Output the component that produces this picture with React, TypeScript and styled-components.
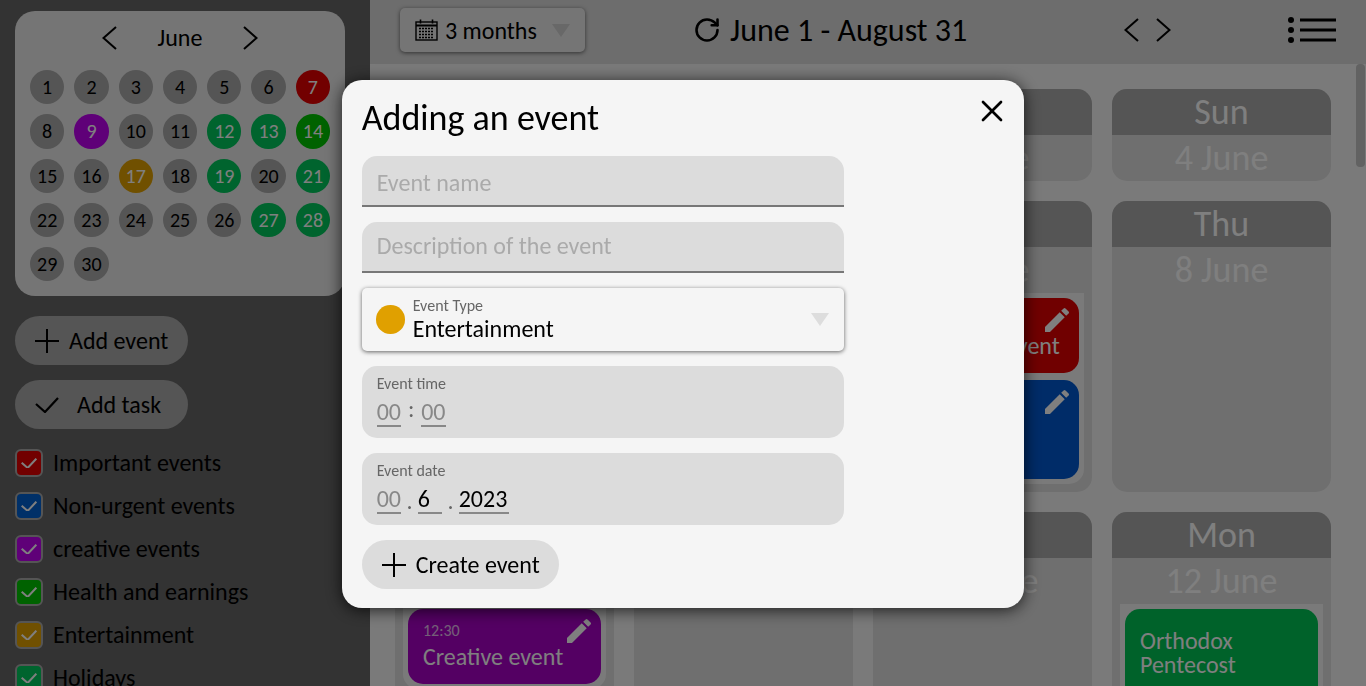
import styled, { createGlobalStyle } from "styled-components";
import { RotateCw, X } from "lucide-react";
import { MdEdit } from "react-icons/md";

const GlobalStyle = createGlobalStyle`
  html, body {
    margin: 0;
    height: 100%;
    overflow: hidden;
  }
  body {
    font-family: Carlito, Calibri, Lato, sans-serif;
    color: #000;
  }
  * {
    box-sizing: border-box;
  }
`;

const Page = styled.div`
  display: flex;
  height: 100vh;
  overflow: hidden;
`;

const Sidebar = styled.aside`
  width: 370px;
  flex: none;
  height: 100%;
  overflow: hidden;
  padding: 11px 15px 0;
  background: #666;
`;

const MiniCalendar = styled.section`
  width: 330px;
  height: 285px;
  padding: 0 15px;
  border-radius: 20px;
  background: #eaeaea;
`;

const MonthBar = styled.div`
  display: flex;
  align-items: center;
  justify-content: center;
  gap: 33px;
  height: 59px;
  padding-bottom: 6px;
  font-size: 24px;
`;

const MonthName = styled.span`
  width: 60px;
  text-align: center;
`;

const DaysGrid = styled.div`
  display: grid;
  grid-template-columns: repeat(7, 1fr);
  gap: 10px;
`;

const DayDot = styled.div<{ $color?: string }>`
  display: flex;
  align-items: center;
  justify-content: center;
  aspect-ratio: 1;
  border-radius: 50%;
  font-size: 20px;
  background: ${(p) => p.$color || "#aaa"};
  color: ${(p) => (p.$color ? "#fff" : "#000")};
`;

const PillButton = styled.div<{ $tone: string; $width: number; $gap: number }>`
  display: flex;
  align-items: center;
  gap: ${(p) => p.$gap}px;
  width: ${(p) => p.$width}px;
  height: 49px;
  padding-left: 20px;
  border-radius: 25px;
  background: ${(p) => p.$tone};
  font-size: 24px;
`;

const SideButtons = styled.div`
  display: flex;
  flex-direction: column;
  gap: 15px;
  margin-top: 20px;
`;

const Filters = styled.ul`
  display: flex;
  flex-direction: column;
  gap: 15px;
  margin: 20px 0 0;
  padding: 0;
  list-style: none;
`;

const FilterRow = styled.li`
  display: flex;
  align-items: center;
  gap: 10px;
  height: 28px;
  font-size: 24px;
`;

const FilterBox = styled.span<{ $color: string }>`
  display: flex;
  align-items: center;
  justify-content: center;
  width: 28px;
  height: 28px;
  border: 2px solid #aaa;
  border-radius: 6px;
  background: ${(p) => p.$color};
`;

const FilterLabel = styled.span`
  padding-bottom: 2px;
`;

const Main = styled.main`
  flex: 1;
  min-width: 0;
  display: flex;
  flex-direction: column;
  height: 100%;
`;

const TopBar = styled.header`
  flex: none;
  display: flex;
  align-items: center;
  height: 64px;
  padding: 0 0 4px 30px;
  background: #dadada;
`;

const RangeSelect = styled.div`
  display: flex;
  align-items: center;
  width: 185px;
  height: 44px;
  padding-left: 15px;
  border-radius: 5px;
  background: #eaeaea;
  box-shadow: 0 1px 4px rgba(0, 0, 0, 0.55);
  font-size: 24px;
`;

const RangeLabel = styled.span`
  margin-left: 7px;
`;

const Caret = styled.span<{ $color: string; $gap: number }>`
  width: 0;
  height: 0;
  margin-left: ${(p) => p.$gap}px;
  border-left: 9px solid transparent;
  border-right: 9px solid transparent;
  border-top: 13px solid ${(p) => p.$color};
`;

const RangeTitle = styled.div`
  display: flex;
  align-items: center;
  gap: 9px;
  width: 277px;
  margin-left: 108px;
  font-size: 32px;
  white-space: nowrap;

  svg {
    flex: none;
  }
`;

const Pager = styled.div`
  display: flex;
  gap: 17px;
  margin-left: 154px;
`;

const ListButton = styled.div`
  margin-left: 117px;
  line-height: 0;
`;

const Content = styled.div`
  flex: 1;
  min-height: 0;
  display: flex;
  background: #f5f5f5;
`;

const Board = styled.div`
  flex: 1;
  min-width: 0;
  height: 100%;
  overflow: hidden;
  display: grid;
  grid-template-columns: repeat(4, 219px);
  grid-auto-rows: min-content;
  column-gap: 20px;
  row-gap: 20px;
  align-content: start;
  padding: 25px 0 0 25px;
`;

const ScrollTrack = styled.div`
  flex: none;
  width: 10px;
`;

const ScrollThumb = styled.div`
  width: 9px;
  height: 103px;
  border-radius: 4px;
  background: #c4c4c4;
`;

const DayCard = styled.article<{ $tall?: boolean }>`
  display: flex;
  flex-direction: column;
  min-height: ${(p) => (p.$tall ? 291 : 92)}px;
  border-radius: 15px;
  overflow: hidden;
  background: #dedede;
`;

const DayName = styled.div`
  height: 46px;
  line-height: 46px;
  text-align: center;
  font-size: 36px;
  color: #fff;
  background: #aaa;
`;

const DayDate = styled.div`
  height: 46px;
  line-height: 46px;
  text-align: center;
  font-size: 36px;
  color: #fff;
`;

const EventList = styled.div`
  display: flex;
  flex-direction: column;
  gap: 7px;
  margin: 0 8px 8px;
  padding: 5px;
  border-radius: 0 0 15px 15px;
  background: #f5f5f5;
`;

const EventChip = styled.div<{ $color: string; $height: number; $timed: boolean }>`
  position: relative;
  height: ${(p) => p.$height}px;
  padding: ${(p) => (p.$timed ? 14 : 20)}px 15px 0;
  border-radius: 15px;
  background: ${(p) => p.$color};
  color: #fff;
  font-size: 24px;
  line-height: 24px;
`;

const EventTime = styled.div`
  font-size: 16px;
  line-height: 16px;
  margin-bottom: 6px;
  opacity: 0.75;
`;

const EditIcon = styled(MdEdit)`
  position: absolute;
  top: 6px;
  right: 6px;
  color: #fff;
`;

const Overlay = styled.div`
  position: fixed;
  inset: 0;
  display: flex;
  align-items: center;
  justify-content: center;
  background: rgba(0, 0, 0, 0.5);
`;

const Modal = styled.section`
  position: relative;
  display: flex;
  flex-direction: column;
  width: 682.67px;
  height: 528px;
  margin-top: 2px;
  padding: 20px 20px 0;
  border-radius: 20px;
  background: #f5f5f5;
  box-shadow: 0 2px 16px rgba(0, 0, 0, 0.75);
`;

const ModalTitle = styled.h2`
  margin: 0;
  height: 56px;
  font-size: 36px;
  font-weight: 400;
  line-height: 36px;
`;

const CloseButton = styled.div`
  position: absolute;
  top: 13px;
  right: 14px;
  line-height: 0;
`;

const Form = styled.div`
  display: flex;
  flex-direction: column;
  width: 482.3px;
`;

const TextField = styled.div<{ $top: number }>`
  height: 51px;
  margin-bottom: 15px;
  padding: ${(p) => p.$top}px 15px 0;
  border-radius: 15px 15px 0 0;
  border-bottom: 2px solid #777;
  background: #dcdcdc;
  color: #aaa;
  font-size: 24px;
  line-height: 30px;
`;

const TypeSelect = styled.div`
  display: flex;
  align-items: center;
  height: 63px;
  margin-bottom: 15px;
  padding: 0 15px 0 14.5px;
  border-radius: 5px;
  background: #f5f5f5;
  box-shadow: 0 1px 4px rgba(0, 0, 0, 0.6);
`;

const TypeDot = styled.span`
  width: 28.5px;
  height: 28.5px;
  border-radius: 50%;
  background: #e0a000;
`;

const TypeText = styled.div`
  flex: 1;
  margin-left: 8px;
`;

const SmallLabel = styled.div`
  font-size: 16px;
  line-height: 18px;
  color: #666;
`;

const TypeValue = styled.div`
  font-size: 24px;
  line-height: 28px;
`;

const StampField = styled.div`
  height: 71.5px;
  margin-bottom: 15.5px;
  padding: 9px 15px 0;
  border-radius: 15px;
  background: #dcdcdc;
`;

const StampRow = styled.div`
  display: flex;
  align-items: flex-end;
  margin-top: 5px;
`;

const StampPart = styled.span<{ $width: number; $filled?: boolean }>`
  width: ${(p) => p.$width}px;
  height: 29px;
  border-bottom: 2px solid #888;
  font-size: 24px;
  line-height: 28px;
  color: ${(p) => (p.$filled ? "#000" : "#888")};
`;

const StampSep = styled.span<{ $colon?: boolean }>`
  width: ${(p) => (p.$colon ? 20 : 16.5)}px;
  height: 29px;
  text-align: center;
  font-size: 24px;
  line-height: ${(p) => (p.$colon ? 22 : 32)}px;
  color: #666;
`;

const Chevron = ({ dir }: { dir: "left" | "right" }) => (
  <svg width="15" height="24" viewBox="0 0 15 24" fill="none" stroke="#000" strokeWidth="2">
    <path d={dir === "left" ? "M14 1 L1.5 12 L14 23" : "M1 1 L13.5 12 L1 23"} />
  </svg>
);

const PlusGlyph = () => (
  <svg width="24" height="24" viewBox="0 0 24 24" fill="none" stroke="#000" strokeWidth="2">
    <path d="M0 12H24M12 0V24" />
  </svg>
);

const CheckGlyph = ({ color = "#000", width = 24, weight = 2.2 }: { color?: string; width?: number; weight?: number }) => (
  <svg width={width} height={(width * 16) / 24} viewBox="0 0 24 16" fill="none" stroke={color} strokeWidth={weight}>
    <path d="M1 7 L10 15 L23 1" />
  </svg>
);

const CalendarGlyph = () => (
  <svg width="23" height="22" viewBox="0 0 23 22" fill="none" stroke="#000">
    <rect x="1" y="3" width="21" height="18" strokeWidth="1.4" />
    <path d="M1 6.5H22" strokeWidth="2" />
    <path d="M5.5 0.5V4.5M17.5 0.5V4.5" strokeWidth="1.6" />
    <path d="M4 9.5H19M4 12.5H19M4 15.5H19M4 18.5H19" strokeWidth="1.6" strokeDasharray="2 1" />
  </svg>
);

const ListGlyph = () => (
  <svg width="48" height="26" viewBox="0 0 48 26" fill="#000">
    <circle cx="3" cy="3" r="3" />
    <circle cx="3" cy="13" r="3" />
    <circle cx="3" cy="23" r="3" />
    <rect x="12" y="1.5" width="36" height="3" />
    <rect x="12" y="11.5" width="36" height="3" />
    <rect x="12" y="21.5" width="36" height="3" />
  </svg>
);

const dotColors: Record<number, string> = {
  7: "#e40000",
  9: "#be00f0",
  12: "#00c85c",
  13: "#00c85c",
  14: "#00c400",
  17: "#e0a000",
  19: "#00c85c",
  21: "#00c85c",
  27: "#00c85c",
  28: "#00c85c",
};

const filters = [
  { label: "Important events", color: "#e40000" },
  { label: "Non-urgent events", color: "#0060d0" },
  { label: "creative events", color: "#be00f0" },
  { label: "Health and earnings", color: "#00c400" },
  { label: "Entertainment", color: "#e0a000" },
  { label: "Holidays", color: "#00c85c" },
];

type DayEvent = { title: string; color: string; height: number; time?: string; edit?: boolean };
type Day = { name: string; date: string; tall?: boolean; events?: DayEvent[] };

const days: Day[] = [
  { name: "Thu", date: "1 June" },
  { name: "Fri", date: "2 June" },
  { name: "Sat", date: "3 June" },
  { name: "Sun", date: "4 June" },
  { name: "Mon", date: "5 June", tall: true },
  { name: "Tue", date: "6 June", tall: true },
  {
    name: "Wed",
    date: "7 June",
    tall: true,
    events: [
      { title: "Important event", time: "10:00", color: "#e00000", height: 75, edit: true },
      { title: "Non-urgent event", time: "14:00", color: "#0058d0", height: 99, edit: true },
    ],
  },
  { name: "Thu", date: "8 June", tall: true },
  {
    name: "Fri",
    date: "9 June",
    events: [{ title: "Creative event", time: "12:30", color: "#a800c6", height: 75, edit: true }],
  },
  { name: "Sat", date: "10 June" },
  { name: "Sun", date: "11 June" },
  {
    name: "Mon",
    date: "12 June",
    events: [{ title: "Orthodox Pentecost", color: "#00c455", height: 99 }],
  },
];

const App = () => {
  return (
    <>
      <GlobalStyle />
      <Page>
        <Sidebar>
          <MiniCalendar>
            <MonthBar>
              <Chevron dir="left" />
              <MonthName>June</MonthName>
              <Chevron dir="right" />
            </MonthBar>
            <DaysGrid>
              {Array.from({ length: 30 }, (_, i) => i + 1).map((d) => (
                <DayDot key={d} $color={dotColors[d]}>
                  {d}
                </DayDot>
              ))}
            </DaysGrid>
          </MiniCalendar>
          <SideButtons>
            <PillButton $tone="#aaa" $width={173} $gap={10}>
              <PlusGlyph />
              Add event
            </PillButton>
            <PillButton $tone="#aaa" $width={173} $gap={18}>
              <CheckGlyph />
              Add task
            </PillButton>
          </SideButtons>
          <Filters>
            {filters.map((f) => (
              <FilterRow key={f.label}>
                <FilterBox $color={f.color}>
                  <CheckGlyph color="#fff" width={16} weight={3} />
                </FilterBox>
                <FilterLabel>{f.label}</FilterLabel>
              </FilterRow>
            ))}
          </Filters>
        </Sidebar>
        <Main>
          <TopBar>
            <RangeSelect>
              <CalendarGlyph />
              <RangeLabel>3 months</RangeLabel>
              <Caret $color="#d0d0d0" $gap={15} />
            </RangeSelect>
            <RangeTitle>
              <RotateCw size={28} strokeWidth={2.2} />
              June 1 - August 31
            </RangeTitle>
            <Pager>
              <Chevron dir="left" />
              <Chevron dir="right" />
            </Pager>
            <ListButton>
              <ListGlyph />
            </ListButton>
          </TopBar>
          <Content>
            <Board>
              {days.map((d) => (
                <DayCard key={d.date} $tall={d.tall}>
                  <DayName>{d.name}</DayName>
                  <DayDate>{d.date}</DayDate>
                  {d.events && (
                    <EventList>
                      {d.events.map((e) => (
                        <EventChip key={e.title} $color={e.color} $height={e.height} $timed={!!e.time}>
                          {e.time && <EventTime>{e.time}</EventTime>}
                          {e.title}
                          {e.edit && <EditIcon size={32} />}
                        </EventChip>
                      ))}
                    </EventList>
                  )}
                </DayCard>
              ))}
            </Board>
            <ScrollTrack>
              <ScrollThumb />
            </ScrollTrack>
          </Content>
        </Main>
      </Page>
      <Overlay>
        <Modal>
          <ModalTitle>Adding an event</ModalTitle>
          <CloseButton>
            <X size={36} strokeWidth={1.8} />
          </CloseButton>
          <Form>
            <TextField $top={12}>Event name</TextField>
            <TextField $top={9}>Description of the event</TextField>
            <TypeSelect>
              <TypeDot />
              <TypeText>
                <SmallLabel>Event Type</SmallLabel>
                <TypeValue>Entertainment</TypeValue>
              </TypeText>
              <Caret $color="#ddd" $gap={0} />
            </TypeSelect>
            <StampField>
              <SmallLabel>Event time</SmallLabel>
              <StampRow>
                <StampPart $width={24.5}>00</StampPart>
                <StampSep $colon>:</StampSep>
                <StampPart $width={24.5}>00</StampPart>
              </StampRow>
            </StampField>
            <StampField>
              <SmallLabel>Event date</SmallLabel>
              <StampRow>
                <StampPart $width={24.5}>00</StampPart>
                <StampSep>.</StampSep>
                <StampPart $width={24.5} $filled>6</StampPart>
                <StampSep>.</StampSep>
                <StampPart $width={50} $filled>2023</StampPart>
              </StampRow>
            </StampField>
            <PillButton $tone="#dcdcdc" $width={197} $gap={10}>
              <PlusGlyph />
              Create event
            </PillButton>
          </Form>
        </Modal>
      </Overlay>
    </>
  );
};

export default App;
